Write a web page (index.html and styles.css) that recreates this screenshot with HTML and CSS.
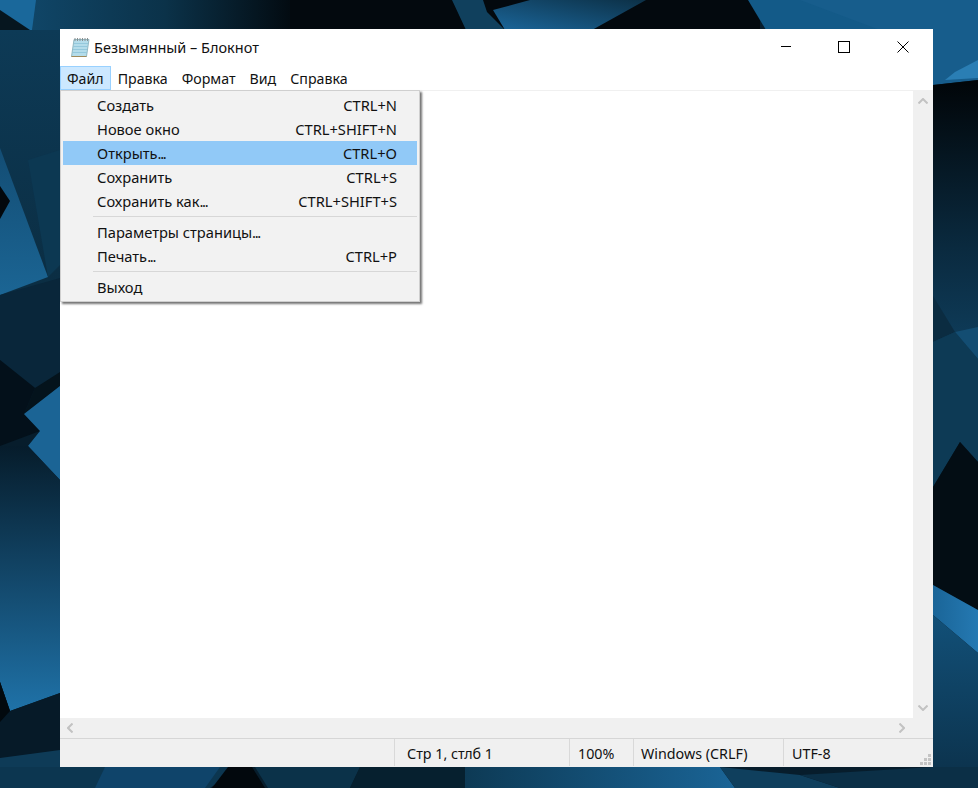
FILE: index.html

```html
<!DOCTYPE html>
<html lang="ru">
<head>
  <meta charset="UTF-8">
  <title>Безымянный – Блокнот</title>
  <link rel="stylesheet" href="styles.css">
</head>
<body>
  <div class="desktop">
    <!-- wallpaper -->
    <svg class="wallpaper" viewBox="0 0 978 788" aria-hidden="true">
      <defs>
        <linearGradient id="blueUp" x1="0" y1="1" x2="0" y2="0">
          <stop offset="0" stop-color="#1f72a8"/>
          <stop offset="1" stop-color="#061c2b"/>
        </linearGradient>
        <linearGradient id="topNavy" x1="0" y1="0" x2="1" y2="0">
          <stop offset="0" stop-color="#114a6e"/>
          <stop offset=".55" stop-color="#0b3249"/>
          <stop offset="1" stop-color="#02080d"/>
        </linearGradient>
        <linearGradient id="leftUpper" x1="0" y1="0" x2="0" y2="1">
          <stop offset="0" stop-color="#0d3a56"/>
          <stop offset="1" stop-color="#0b2d42"/>
        </linearGradient>
        <linearGradient id="leftTri" x1="0" y1="0" x2="0" y2="1">
          <stop offset="0" stop-color="#134d74"/>
          <stop offset="1" stop-color="#1b6594"/>
        </linearGradient>
        <linearGradient id="notchBlue" x1="0" y1="1" x2="1" y2="0">
          <stop offset="0" stop-color="#1b669a"/>
          <stop offset="1" stop-color="#0c3046"/>
        </linearGradient>
        <linearGradient id="rightDark" x1="0" y1="0" x2="0" y2="1">
          <stop offset="0" stop-color="#010508"/>
          <stop offset=".6" stop-color="#0a2a3f"/>
          <stop offset="1" stop-color="#0f3f5e"/>
        </linearGradient>
        <linearGradient id="rightBlue" x1="0" y1="0" x2="1" y2="0">
          <stop offset="0" stop-color="#1a6598"/>
          <stop offset="1" stop-color="#2579b2"/>
        </linearGradient>
        <linearGradient id="rightLow" x1="0" y1="0" x2="0" y2="1">
          <stop offset="0" stop-color="#125078"/>
          <stop offset="1" stop-color="#0b3049"/>
        </linearGradient>
        <linearGradient id="bottomBlue" x1="0" y1="0" x2="1" y2="0">
          <stop offset="0" stop-color="#0d3a55"/>
          <stop offset="1" stop-color="#1a6496"/>
        </linearGradient>
      </defs>
      <rect width="978" height="788" fill="#071d2c"/>

      <!-- top -->
      <rect x="0" y="0" width="300" height="30" fill="url(#topNavy)"/>
      <rect x="290" y="0" width="470" height="30" fill="#03090e"/>
      <polygon points="0,0 36,0 32,30 0,30" fill="#1a689b"/>
      <polygon points="0,10 30,30 0,30" fill="#06161f"/>
      <polygon points="452,0 483,0 487,12 505,30 466,30" fill="#10405d"/>
      <polygon points="493,10 530,0 646,0 592,30 505,30" fill="url(#notchBlue)"/>
      <polygon points="748,0 875,0 930,30 766,30" fill="#135a88"/>
      <polygon points="800,0 978,0 978,80 933,85 880,30" fill="#175d8c"/>

      <!-- left -->
      <rect x="0" y="30" width="60" height="270" fill="url(#leftUpper)"/>
      <polygon points="0,148 48,277 0,295" fill="url(#leftTri)"/>
      <polygon points="28,160 60,150 60,265 48,277" fill="#0c3852"/>
      <polygon points="0,186 10,201 0,219" fill="#03080c"/>
      <polygon points="0,295 60,278 60,385 35,388 0,360" fill="#09263a"/>
      <polygon points="0,360 35,388 24,414 40,431 0,446" fill="#03101a"/>
      <polygon points="35,388 60,372 60,386 24,414" fill="#04131c"/>
      <polygon points="24,414 60,386 60,480 28,446 40,431" fill="#1b6495"/>
      <polygon points="0,446 28,446 60,480 60,693 10,711 0,682" fill="url(#blueUp)"/>
      <polygon points="0,682 10,711 60,693 60,767 0,767" fill="#061a28"/>
      <polygon points="0,682 10,711 0,722" fill="#02090e"/>
      <polygon points="0,758 60,750 60,788 0,788" fill="#0e3b57"/>

      <!-- right -->
      <polygon points="933,85 978,80 978,360 933,360" fill="url(#rightDark)"/>
      <polygon points="955,72 978,60 978,78 945,80" fill="#2a7eb4"/>
      <polygon points="933,296 955,332 933,342" fill="#0b2c41"/>
      <polygon points="955,332 978,327 978,359" fill="#134d72"/>
      <polygon points="933,342 955,332 978,359 978,462 960,442 933,487" fill="#0d3a55"/>
      <polygon points="933,487 960,442 978,462 978,610 933,585" fill="#030d14"/>
      <polygon points="933,585 978,610 978,653 933,615" fill="url(#rightBlue)"/>
      <polygon points="933,615 978,653 978,788 933,788" fill="url(#rightLow)"/>

      <!-- bottom -->
      <polygon points="0,767 240,767 210,788 0,788" fill="#0c3650"/>
      <polygon points="105,767 220,767 205,788 95,788" fill="#0f446a"/>
      <polygon points="228,767 252,767 265,788 212,788" fill="#02080d"/>
      <polygon points="255,767 360,767 350,788 268,788" fill="#0b3249"/>
      <polygon points="360,767 465,767 465,788 350,788" fill="#06202f"/>
      <polygon points="465,767 720,767 735,788 465,788" fill="url(#bottomBlue)"/>
      <polygon points="720,767 800,775 840,788 735,788" fill="#0f3f5d"/>
      <polygon points="800,775 933,767 978,767 978,788 840,788" fill="#0b2f46"/>
    </svg>

    <div class="window">
      <div class="titlebar">
        <svg class="app-icon" viewBox="0 0 20 22" aria-hidden="true">
          <path d="M4 3.500h15l-2.500 17H1.500z" fill="#b4dcea" stroke="#7fa9b5" stroke-width=".8"/>
          <path d="M4 7.500h14M3.500 10.500h14M3 13.500h14M2.700 16.500h14" stroke="#8cc3d8" stroke-width=".8"/>
          <path d="M5 2v3M7.500 2v3M10 2v3M12.500 2v3M15 2v3M17.500 2v3" stroke="#8a8f90" stroke-width="1"/>
          <path d="M1.500 20.500h15" stroke="#a08a5a" stroke-width="1"/>
        </svg>
        <span class="title">Безымянный – Блокнот</span>
        <div class="controls">
          <div class="control">
            <svg viewBox="0 0 12 12"><path d="M2 5.500h10" stroke="#000" fill="none"/></svg>
          </div>
          <div class="control">
            <svg viewBox="0 0 12 12"><rect x=".5" y=".5" width="11" height="11" stroke="#000" fill="none"/></svg>
          </div>
          <div class="control">
            <svg viewBox="0 0 12 12"><path d="M.5.500l11 11M11.500.500l-11 11" stroke="#000" fill="none"/></svg>
          </div>
        </div>
      </div>

      <nav class="menubar">
        <span class="menubar-item active">Файл</span>
        <span class="menubar-item">Правка</span>
        <span class="menubar-item">Формат</span>
        <span class="menubar-item">Вид</span>
        <span class="menubar-item">Справка</span>
      </nav>

      <div class="editor">
        <div class="editor-row">
          <div class="textarea"></div>
          <div class="vscroll">
            <svg class="arrow" viewBox="0 0 10 6"><path d="M.5 5.500L5 1l4.500 4.500" /></svg>
            <svg class="arrow" viewBox="0 0 10 6"><path d="M.5.500L5 5l4.500-4.500" /></svg>
          </div>
        </div>
        <div class="hscroll">
          <svg class="arrow-h" viewBox="0 0 6 10"><path d="M5.500.500L1 5l4.500 4.500" /></svg>
          <svg class="arrow-h" viewBox="0 0 6 10"><path d="M.5.500L5 5 .5 9.500" /></svg>
        </div>
      </div>

      <footer class="statusbar">
        <div class="status-cell cell-pos">Стр 1, стлб 1</div>
        <div class="status-cell cell-zoom">100%</div>
        <div class="status-cell cell-eol">Windows (CRLF)</div>
        <div class="status-cell cell-enc">UTF-8</div>
        <svg class="grip" viewBox="0 0 12 12">
          <path d="M8 0h3v3H8zM4 4h3v3H4zM8 4h3v3H8zM0 8h3v3H0zM4 8h3v3H4zM8 8h3v3H8z" fill="#c4c4c4"/>
        </svg>
      </footer>

      <ul class="dropdown">
        <li class="menu-item"><span>Создать</span><span>CTRL+N</span></li>
        <li class="menu-item"><span>Новое окно</span><span>CTRL+SHIFT+N</span></li>
        <li class="menu-item selected"><span>Открыть<span class="dots">...</span></span><span>CTRL+O</span></li>
        <li class="menu-item"><span>Сохранить</span><span>CTRL+S</span></li>
        <li class="menu-item"><span>Сохранить как<span class="dots">...</span></span><span>CTRL+SHIFT+S</span></li>
        <li class="menu-sep"></li>
        <li class="menu-item"><span>Параметры страницы<span class="dots">...</span></span></li>
        <li class="menu-item"><span>Печать<span class="dots">...</span></span><span>CTRL+P</span></li>
        <li class="menu-sep"></li>
        <li class="menu-item"><span>Выход</span></li>
      </ul>
    </div>
  </div>
</body>
</html>
```

FILE: styles.css

```css
body {
  margin: 0;
  font-family: 'Noto Sans', sans-serif;
  font-size: 14.67px;
  color: #111;
}

.desktop {
  position: relative;
  width: 978px;
  height: 788px;
  overflow: hidden;
}

.wallpaper {
  position: absolute;
  left: 0;
  top: 0;
  width: 978px;
  height: 788px;
}

.window {
  position: absolute;
  left: 60px;
  top: 29px;
  width: 873px;
  height: 738px;
  display: flex;
  flex-direction: column;
  background: #fff;
}

.titlebar {
  height: 37px;
  display: flex;
  align-items: flex-start;
  padding-left: 10px;
}

.app-icon {
  width: 20px;
  height: 22px;
  margin: 7px 4px 0 0;
}

.title {
  flex: 1;
  line-height: 36px;
  font-size: 14.5px;
}

.controls {
  display: flex;
  gap: 1px;
  padding-right: 1px;
}

.control {
  width: 58px;
  height: 36px;
  display: flex;
  align-items: center;
  justify-content: center;
}

.control svg {
  width: 12px;
  height: 12px;
}

.menubar {
  height: 24px;
  display: flex;
  font-size: 14.2px;
}

.menubar-item {
  display: flex;
  align-items: center;
  padding: 0 6px;
  border: 1px solid transparent;
}

.menubar-item.active {
  background: #cce8ff;
  border-color: #99d1ff;
}

.editor {
  flex: 1;
  display: flex;
  flex-direction: column;
  background: #f0f0f0;
  padding-top: 1px;
}

.editor-row {
  flex: 1;
  display: flex;
}

.textarea {
  flex: 1;
  background: #fff;
}

.vscroll {
  width: 20px;
  display: flex;
  flex-direction: column;
  justify-content: space-between;
  align-items: center;
  padding: 7px 0;
  box-sizing: border-box;
}

.hscroll {
  height: 20px;
  display: flex;
  justify-content: space-between;
  align-items: center;
  padding: 0 28px 0 7px;
}

.arrow {
  width: 10px;
  height: 6px;
}

.arrow-h {
  width: 6px;
  height: 10px;
}

.arrow path,
.arrow-h path {
  fill: none;
  stroke: #c2c2c2;
  stroke-width: 2;
}

.statusbar {
  position: relative;
  height: 29px;
  display: flex;
  padding-left: 334px;
  box-sizing: border-box;
  background: #f0f0f0;
  border-top: 1px solid #d6d6d6;
  font-size: 14.3px;
}

.status-cell {
  border-left: 1px solid #d9d9d9;
  margin-bottom: 1px;
  display: flex;
  align-items: center;
  box-sizing: border-box;
  padding: 1px 0 0 7px;
}

.cell-pos {
  width: 175px;
  padding-left: 12px;
}

.cell-zoom {
  width: 64px;
  padding-left: 8px;
}

.cell-eol {
  width: 150px;
}

.cell-enc {
  width: 150px;
  padding-left: 8px;
}

.grip {
  position: absolute;
  right: 1px;
  bottom: 1px;
  width: 12px;
  height: 12px;
}

.dropdown {
  position: absolute;
  left: 0;
  top: 61px;
  width: 360px;
  margin: 0;
  padding: 2px;
  box-sizing: border-box;
  list-style: none;
  background: #f2f2f2;
  border: 1px solid #cfcfcf;
  box-shadow: 2px 2px 2px rgba(0, 0, 0, 0.55);
}

.menu-item {
  height: 24px;
  display: flex;
  align-items: center;
  justify-content: space-between;
  padding: 0 20px 0 34px;
}

.menu-item.selected {
  background: #91c9f7;
}

.dots {
  letter-spacing: -1.3px;
}

.menu-sep {
  height: 1px;
  margin: 3px 0 3px 30px;
  background: #d7d7d7;
}
```
